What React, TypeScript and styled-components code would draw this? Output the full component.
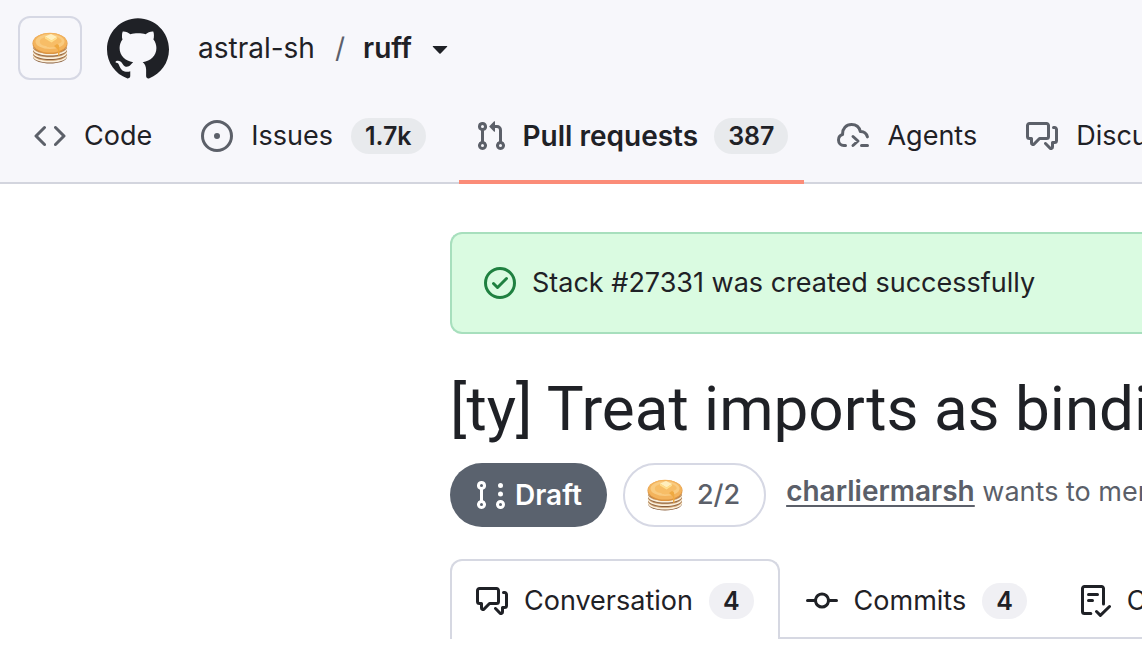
import type { ReactNode } from "react";
import styled, { createGlobalStyle } from "styled-components";

const GlobalStyle = createGlobalStyle`
  *, *::before, *::after { box-sizing: border-box; }
  body {
    margin: 0;
    background: #ffffff;
    color: #1f2126;
    font-family: Inter, "Liberation Sans", sans-serif;
    font-size: 27px;
    line-height: 40px;
    overflow-x: hidden;
  }
  a { color: inherit; text-decoration: none; }
  button { font: inherit; color: inherit; background: none; border: 0; padding: 0; cursor: pointer; }
`;

const Page = styled.div`
  overflow: hidden;
  white-space: nowrap;
`;

const Header = styled.header`
  background: #f7f7fb;
  border-bottom: 2px solid #d3d5de;
`;

const ContextRow = styled.div`
  display: flex;
  align-items: center;
  padding: 16px 18px;
`;

const StackButton = styled.button`
  display: flex;
  align-items: center;
  justify-content: center;
  width: 64px;
  height: 64px;
  border: 2px solid #d6d8e4;
  border-radius: 12px;
`;

const HomeLink = styled.a`
  display: flex;
  margin: 0 29px 0 25px;
`;

const Crumbs = styled.div`
  display: flex;
  align-items: center;
  font-size: 28px;
`;

const Slash = styled.span`
  margin: 0 18px 0 20px;
  color: #5c5f6b;
`;

const RepoLink = styled.a`
  font-weight: 600;
`;

const CaretButton = styled.button`
  display: flex;
  margin-left: 12px;
`;

const RepoNav = styled.nav`
  display: flex;
  gap: 17px;
  margin-bottom: -2px;
  padding: 0 18px;
`;

const RepoTab = styled.a<{ $active?: boolean }>`
  display: flex;
  flex: none;
  align-items: center;
  gap: ${(p) => (p.$active ? "16px" : "18px")};
  height: 88px;
  padding: 0 16px 4px;
  border-bottom: 4px solid ${(p) => (p.$active ? "#fb8c78" : "transparent")};
  font-size: ${(p) => (p.$active ? "28px" : "27px")};
  font-weight: ${(p) => (p.$active ? 600 : 400)};
  svg { color: #5c6069; }
`;

const Counter = styled.span<{ $tone?: "light" }>`
  min-width: 44px;
  height: 36px;
  padding: 0 14px;
  border-radius: 18px;
  background: ${(p) => (p.$tone === "light" ? "#f0f0f4" : "#e8eaed")};
  font-size: 25px;
  font-weight: 600;
  line-height: 36px;
  text-align: center;
`;

const Main = styled.main`
  padding: 48px 0 12px 450px;
`;

const Banner = styled.div`
  display: flex;
  align-items: center;
  gap: 16px;
  height: 102px;
  padding: 0 32px;
  border: 2px solid #a7dfbd;
  border-right: 0;
  border-radius: 12px 0 0 12px;
  background: #dafbe1;
  svg { color: #1f8040; }
`;

const Title = styled.h1`
  margin: 35px 0 14px;
  font-family: Roboto, Inter, sans-serif;
  font-size: 62px;
  font-weight: 400;
  line-height: 80px;
`;

const MetaRow = styled.div`
  display: flex;
  align-items: flex-start;
  gap: 16px;
  color: #5b5f69;
`;

const DraftPill = styled.span`
  display: flex;
  flex: none;
  align-items: center;
  gap: 8px;
  height: 64px;
  padding: 0 25px;
  border-radius: 32px;
  background: #5a626e;
  color: #ffffff;
  font-size: 28px;
  font-weight: 600;
`;

const StackPill = styled.button`
  display: flex;
  flex: none;
  align-items: center;
  gap: 14px;
  height: 64px;
  padding: 0 24px 0 22px;
  border: 2px solid #d6d8e4;
  border-radius: 32px;
  font-weight: 500;
`;

const Summary = styled.span`
  margin-left: 4px;
  line-height: 56px;
`;

const Author = styled.a`
  font-size: 28px;
  font-weight: 600;
  text-decoration: underline;
  text-decoration-thickness: 2px;
  text-underline-offset: 4px;
`;

const PullTabs = styled.nav`
  display: flex;
  margin-top: 32px;
  box-shadow: inset 0 -2px #d6d8e2;
`;

const PullTab = styled.a<{ $active?: boolean }>`
  display: flex;
  flex: none;
  align-items: center;
  gap: 16px;
  height: 80px;
  padding: 2px 24px 0;
  border: 2px solid ${(p) => (p.$active ? "#d6d8e2" : "transparent")};
  border-bottom: 0;
  border-radius: 12px 12px 0 0;
  background: ${(p) => (p.$active ? "#ffffff" : "transparent")};
`;

const icons = {
  code: "m11.28 3.22 4.25 4.25a.75.75 0 0 1 0 1.06l-4.25 4.25a.749.749 0 0 1-1.275-.326.749.749 0 0 1 .215-.734L13.94 8l-3.72-3.72a.749.749 0 0 1 .326-1.275.749.749 0 0 1 .734.215Zm-6.56 0a.751.751 0 0 1 1.042.018.751.751 0 0 1 .018 1.042L2.06 8l3.72 3.72a.749.749 0 0 1-.326 1.275.749.749 0 0 1-.734-.215L.47 8.53a.75.75 0 0 1 0-1.06Z",
  issue: "M8 9.5a1.5 1.5 0 1 0 0-3 1.5 1.5 0 0 0 0 3ZM8 0a8 8 0 1 1 0 16A8 8 0 0 1 8 0ZM1.5 8a6.5 6.5 0 1 0 13 0 6.5 6.5 0 0 0-13 0Z",
  pull: "M1.5 3.25a2.25 2.25 0 1 1 3 2.122v5.256a2.251 2.251 0 1 1-1.5 0V5.372A2.25 2.25 0 0 1 1.5 3.25Zm5.677-.177L9.573.677A.25.25 0 0 1 10 .854V2.5h1A2.5 2.5 0 0 1 13.5 5v5.628a2.251 2.251 0 1 1-1.5 0V5a1 1 0 0 0-1-1h-1v1.646a.25.25 0 0 1-.427.177L7.177 3.427a.25.25 0 0 1 0-.354ZM3.75 2.5a.75.75 0 1 0 0 1.5.75.75 0 0 0 0-1.5Zm0 9.5a.75.75 0 1 0 0 1.5.75.75 0 0 0 0-1.5Zm8.25.75a.75.75 0 1 0 1.5 0 .75.75 0 0 0-1.5 0Z",
  draft: "M3.25 1A2.25 2.25 0 0 1 4 5.372v5.256a2.251 2.251 0 1 1-1.5 0V5.372A2.251 2.251 0 0 1 3.25 1Zm9.5 14a2.25 2.25 0 1 1 0-4.5 2.25 2.25 0 0 1 0 4.5ZM2.5 3.25a.75.75 0 1 0 1.5 0 .75.75 0 0 0-1.5 0ZM3.25 12a.75.75 0 1 0 0 1.5.75.75 0 0 0 0-1.5Zm9.5 0a.75.75 0 1 0 0 1.5.75.75 0 0 0 0-1.5ZM14 7.5a1.25 1.25 0 1 1-2.5 0 1.25 1.25 0 0 1 2.5 0Zm0-4.25a1.25 1.25 0 1 1-2.5 0 1.25 1.25 0 0 1 2.5 0Z",
  discussion: "M1.75 1h8.5c.966 0 1.75.784 1.75 1.75v5.5A1.75 1.75 0 0 1 10.25 10H7.061l-2.574 2.573A1.458 1.458 0 0 1 2 11.543V10h-.25A1.75 1.75 0 0 1 0 8.25v-5.5C0 1.784.784 1 1.75 1ZM1.5 2.75v5.5c0 .138.112.25.25.25h1a.75.75 0 0 1 .75.75v2.19l2.72-2.72a.749.749 0 0 1 .53-.22h3.5a.25.25 0 0 0 .25-.25v-5.5a.25.25 0 0 0-.25-.25h-8.5a.25.25 0 0 0-.25.25Zm13 2a.25.25 0 0 0-.25-.25h-.5a.75.75 0 0 1 0-1.5h.5c.966 0 1.75.784 1.75 1.75v5.5A1.75 1.75 0 0 1 14.25 12H14v1.543a1.458 1.458 0 0 1-2.487 1.03L9.22 12.28a.749.749 0 0 1 .326-1.275.749.749 0 0 1 .734.215l2.22 2.22v-2.19a.75.75 0 0 1 .75-.75h1a.25.25 0 0 0 .25-.25Z",
  commit: "M11.93 8.5a4.002 4.002 0 0 1-7.86 0H.75a.75.75 0 0 1 0-1.5h3.32a4.002 4.002 0 0 1 7.86 0h3.32a.75.75 0 0 1 0 1.5Zm-1.43-.75a2.5 2.5 0 1 0-5 0 2.5 2.5 0 0 0 5 0Z",
  checklist: "M2.5 1.75v11.5c0 .138.112.25.25.25h3.17a.75.75 0 0 1 0 1.5H2.75A1.75 1.75 0 0 1 1 13.25V1.75C1 .784 1.784 0 2.75 0h8.5C12.216 0 13 .784 13 1.75v7.736a.75.75 0 0 1-1.5 0V1.75a.25.25 0 0 0-.25-.25h-8.5a.25.25 0 0 0-.25.25Zm13.274 9.537v-.001l-4.557 4.45a.75.75 0 0 1-1.055-.008l-1.943-1.95a.75.75 0 0 1 1.062-1.058l1.419 1.425 4.026-3.932a.75.75 0 1 1 1.048 1.074ZM4.75 4h4.5a.75.75 0 0 1 0 1.5h-4.5a.75.75 0 0 1 0-1.5ZM4 7.75A.75.75 0 0 1 4.75 7h2a.75.75 0 0 1 0 1.5h-2A.75.75 0 0 1 4 7.75Z",
  check: "M0 8a8 8 0 1 1 16 0A8 8 0 0 1 0 8Zm1.5 0a6.5 6.5 0 1 0 13 0 6.5 6.5 0 0 0-13 0Zm10.28-1.72-4.5 4.5a.75.75 0 0 1-1.06 0l-2-2a.751.751 0 0 1 .018-1.042.751.751 0 0 1 1.042-.018l1.47 1.47 3.97-3.97a.751.751 0 0 1 1.042.018.751.751 0 0 1 .018 1.042Z",
  caret: "m4.427 7.427 3.396 3.396a.25.25 0 0 0 .354 0l3.396-3.396A.25.25 0 0 0 11.396 7H4.604a.25.25 0 0 0-.177.427Z",
};

const Svg = styled.svg`
  display: block;
  flex: none;
  fill: currentColor;
`;

function Icon({ name }: { name: keyof typeof icons }) {
  return (
    <Svg width="32" height="32" viewBox="0 0 16 16" aria-hidden="true">
      <path d={icons[name]} />
    </Svg>
  );
}

function AgentIcon() {
  return (
    <Svg width="32" height="32" viewBox="0 0 16 16" aria-hidden="true">
      <g fill="none" stroke="currentColor" strokeWidth="1.5" strokeLinecap="round" strokeLinejoin="round">
        <path d="M4.25 12.75h-.8A2.75 2.75 0 0 1 .75 10c0-1.35.85-2.45 2.05-2.75C2.65 4.3 4.6 2.25 7.25 2.25c2.2 0 3.9 1.3 4.4 3.5 1.75-.05 3.1 1 3.55 2.7" />
        <path d="m8 8.25 2.5 2.25L8 12.75M12.25 12.75h3" />
      </g>
    </Svg>
  );
}

function Mark() {
  return (
    <Svg width="62" height="62" viewBox="0.5 0.5 23 23" role="img" aria-label="GitHub">
      <path d="M10.226 17.284c-2.965-.36-5.054-2.493-5.054-5.256 0-1.123.404-2.336 1.078-3.144-.292-.741-.247-2.314.09-2.965.898-.112 2.111.36 2.83 1.01.853-.269 1.752-.404 2.853-.404 1.1 0 1.999.135 2.807.382.696-.629 1.932-1.1 2.83-.988.315.606.36 2.179.067 2.942.72.854 1.101 2 1.101 3.167 0 2.763-2.089 4.852-5.098 5.234.763.494 1.28 1.572 1.28 2.807v2.336c0 .674.561 1.056 1.235.786 4.066-1.55 7.255-5.615 7.255-10.646C23.5 6.188 18.334 1 11.978 1 5.62 1 .5 6.188.5 12.545c0 4.986 3.167 9.12 7.435 10.669.606.225 1.19-.18 1.19-.786V20.63a2.9 2.9 0 0 1-1.078.224c-1.483 0-2.359-.808-2.987-2.313-.247-.607-.517-.966-1.034-1.033-.27-.023-.359-.135-.359-.27 0-.27.45-.471.898-.471.652 0 1.213.404 1.797 1.235.45.651.921.943 1.483.943.561 0 .92-.202 1.437-.719.382-.381.674-.718.944-.943Z" />
    </Svg>
  );
}

const layers = [26, 22.5, 19, 15.5];

function Pancakes() {
  return (
    <Svg width="36" height="32" viewBox="0 0 36 32" role="img" aria-label="Pancakes">
      {layers.map((y) => (
        <g key={y}>
          <path d={`M1 ${y - 3}v2.2c2 8.3 32 8.3 34 0v-2.2z`} fill="#8a603f" />
          <path d={`M.8 ${y - 3.5}v2c2.2 8 32.2 8 34.4 0v-2z`} fill="#fbf0dc" />
          <path d={`M1 ${y - 4}v1c2 7.8 32 7.8 34 0v-1z`} fill="#c99a69" />
        </g>
      ))}
      <ellipse cx="18" cy="11.5" rx="17.5" ry="10.5" fill="#dd9440" />
      <ellipse cx="18" cy="10.7" rx="17" ry="9.9" fill="#f3b35c" />
      <ellipse cx="18" cy="9.5" rx="14.5" ry="7.5" fill="#f9cb80" />
      <path d="M9 7c4-3 13-4 18-1s2 5-1 6c2 2 1 4-1 4-4-2-8 1-11-2-5 0-8-4-5-7z" fill="#f6b65b" opacity=".7" />
      <path d="M25 12c3 1 2 4 2.5 6v5c0 1-1.5 1-1.5 0v-5c-1-2-3-3-4-4z" fill="#efa940" />
      <path d="m13 4.5 6-2.5 6 3-5.5 3.500z" fill="#ffefbd" />
      <path d="m13 4.5 6.5 4 5.5-3.5v1.8l-5.5 3.7-6.5-4z" fill="#ffdf8c" />
    </Svg>
  );
}

function Tab({ icon, label, count, active }: { icon: ReactNode; label: string; count?: string; active?: boolean }) {
  return (
    <RepoTab href="#" $active={active} aria-current={active ? "page" : undefined}>
      {icon}
      <span>{label}</span>
      {count && <Counter>{count}</Counter>}
    </RepoTab>
  );
}

export default function App() {
  return (
    <Page>
      <GlobalStyle />
      <Header>
        <ContextRow>
          <StackButton type="button" aria-label="Stack"><Pancakes /></StackButton>
          <HomeLink href="#"><Mark /></HomeLink>
          <Crumbs>
            <a href="#">astral-sh</a>
            <Slash>/</Slash>
            <RepoLink href="#">ruff</RepoLink>
            <CaretButton type="button" aria-label="Switch repository"><Icon name="caret" /></CaretButton>
          </Crumbs>
        </ContextRow>
        <RepoNav aria-label="Repository">
          <Tab icon={<Icon name="code" />} label="Code" />
          <Tab icon={<Icon name="issue" />} label="Issues" count="1.7k" />
          <Tab icon={<Icon name="pull" />} label="Pull requests" count="387" active />
          <Tab icon={<AgentIcon />} label="Agents" />
          <Tab icon={<Icon name="discussion" />} label="Discussions" />
        </RepoNav>
      </Header>
      <Main>
        <Banner role="status">
          <Icon name="check" />
          <span>Stack #27331 was created successfully</span>
        </Banner>
        <Title>[ty] Treat imports as bindings</Title>
        <MetaRow>
          <DraftPill><Icon name="draft" />Draft</DraftPill>
          <StackPill type="button"><Pancakes />2/2</StackPill>
          <Summary><Author href="#">charliermarsh</Author> wants to merge</Summary>
        </MetaRow>
        <PullTabs aria-label="Pull request">
          <PullTab href="#" $active aria-current="page">
            <Icon name="discussion" />
            <span>Conversation</span>
            <Counter $tone="light">4</Counter>
          </PullTab>
          <PullTab href="#">
            <Icon name="commit" />
            <span>Commits</span>
            <Counter $tone="light">4</Counter>
          </PullTab>
          <PullTab href="#">
            <Icon name="checklist" />
            <span>Checks</span>
          </PullTab>
        </PullTabs>
      </Main>
    </Page>
  );
}
